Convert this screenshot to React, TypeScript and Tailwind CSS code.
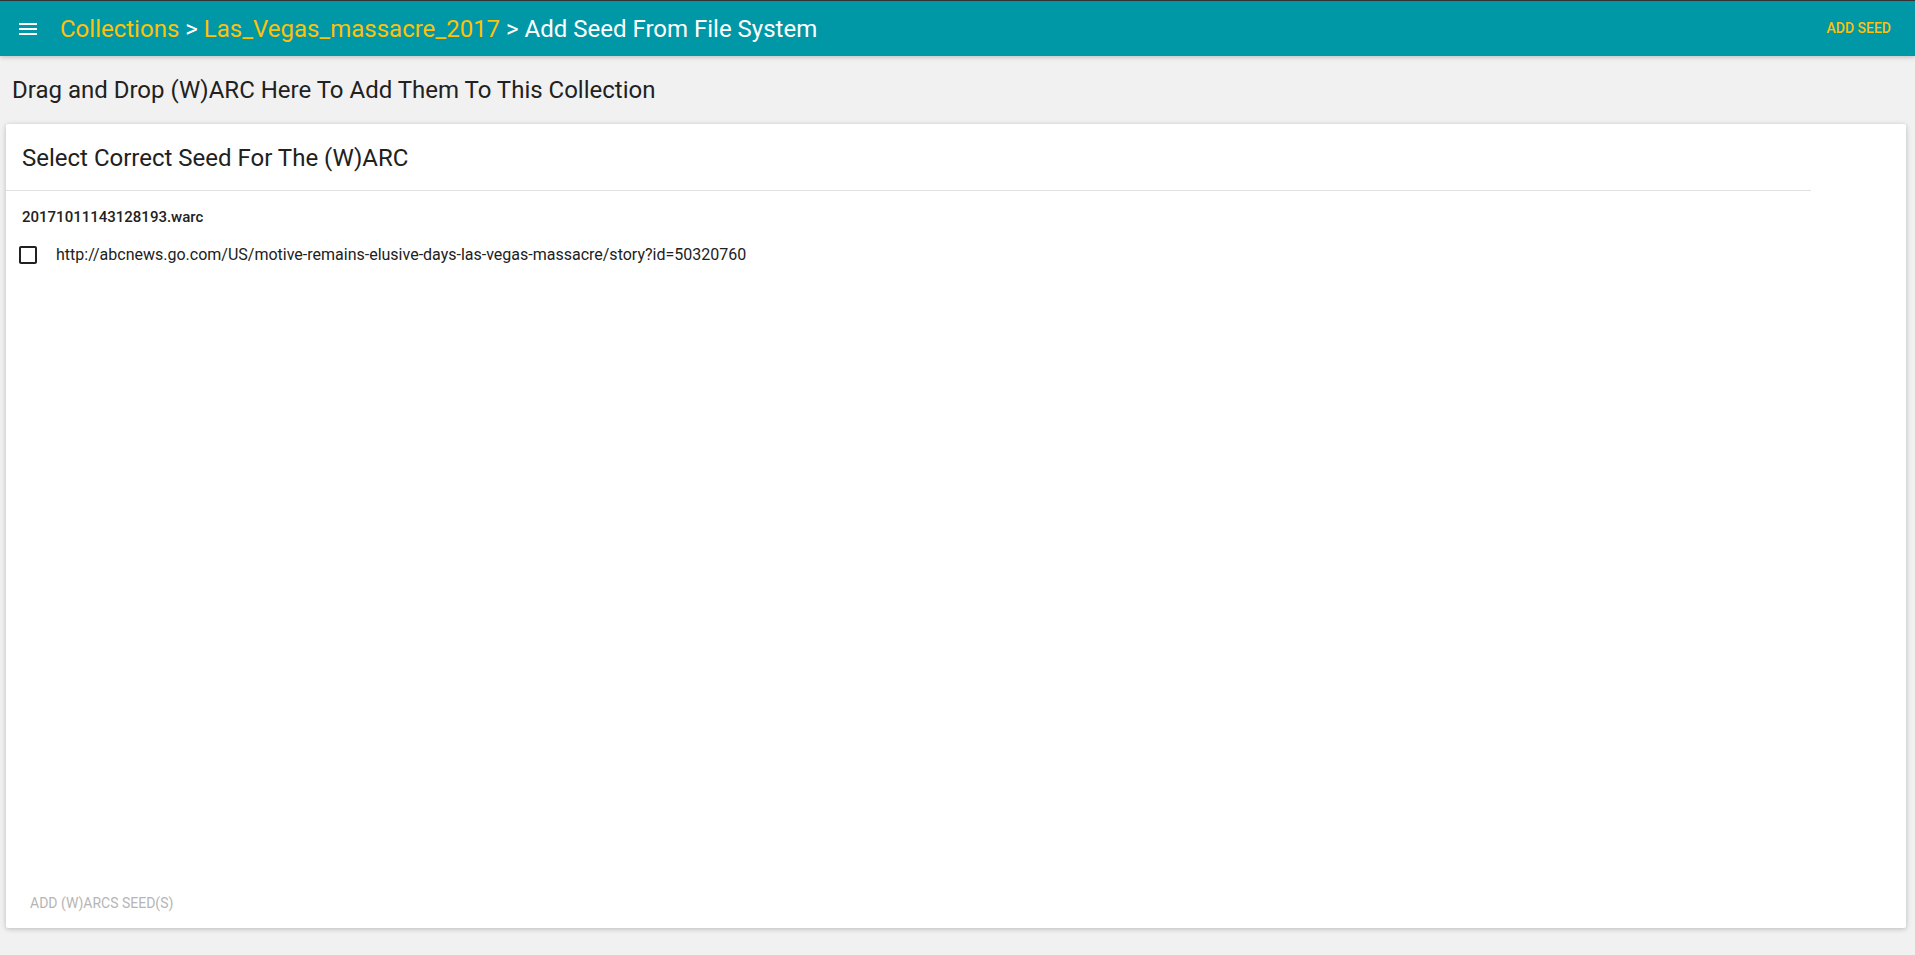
import { useState } from "react";

const warcs = [
  {
    name: "20171011143128193.warc",
    seeds: ["http://abcnews.go.com/US/motive-remains-elusive-days-las-vegas-massacre/story?id=50320760"],
  },
];

function MenuIcon() {
  return (
    <svg width="24" height="24" viewBox="0 0 24 24" fill="#ffffff">
      <path d="M3 18h18v-2H3v2zm0-5h18v-2H3v2zm0-7v2h18V6H3z" />
    </svg>
  );
}

function CheckBox({ checked, onClick }: { checked: boolean; onClick: () => void }) {
  return (
    <button onClick={onClick} className="w-6 h-6 flex items-center justify-center shrink-0">
      <svg width="24" height="24" viewBox="0 0 24 24" fill="#212121">
        {checked ? (
          <path d="M19 3H5c-1.11 0-2 .9-2 2v14c0 1.1.89 2 2 2h14c1.11 0 2-.9 2-2V5c0-1.1-.89-2-2-2zm-9 14l-5-5 1.41-1.41L10 14.17l7.59-7.59L19 8l-9 9z" />
        ) : (
          <path d="M19 5v14H5V5h14m0-2H5c-1.1 0-2 .9-2 2v14c0 1.1.9 2 2 2h14c1.1 0 2-.9 2-2V5c0-1.1-.9-2-2-2z" />
        )}
      </svg>
    </button>
  );
}

export default function App() {
  const [picked, setPicked] = useState<Record<string, boolean>>({});
  const anyPicked = Object.values(picked).some(Boolean);

  return (
    <div className="min-h-screen bg-[#f1f1f1] flex flex-col" style={{ fontFamily: "Roboto, 'Liberation Sans', sans-serif" }}>
      <header className="h-[56px] border-t border-[#333333] bg-[#0097a7] flex items-center pl-4 pr-6 shadow-[0_1px_6px_rgba(0,0,0,0.12),0_1px_4px_rgba(0,0,0,0.12)] relative z-10">
        <MenuIcon />
        <h1 className="ml-5 text-[24px] text-white leading-none">
          <span className="text-[#ffc107]">Collections</span>
          {" > "}
          <span className="text-[#ffc107]">Las_Vegas_massacre_2017</span>
          {" > Add Seed From File System"}
        </h1>
        <button className="ml-auto text-[14px] font-medium text-[#ffc107] uppercase">Add Seed</button>
      </header>

      <p className="px-3 pt-[19px] pb-[19px] text-[24px] text-[#212121] leading-[30px]">
        Drag and Drop (W)ARC Here To Add Them To This Collection
      </p>

      <div className="ml-[6px] mr-[9px] h-[804px] bg-white rounded-[2px] shadow-[0_1px_6px_rgba(0,0,0,0.12),0_1px_4px_rgba(0,0,0,0.12)] flex flex-col">
        <div className="w-[95%] border-b border-[#e0e0e0] h-[67px] flex items-center px-4">
          <span className="text-[24px] text-[#212121] leading-none pt-[1px]">Select Correct Seed For The (W)ARC</span>
        </div>
        <div className="flex-1 px-4 pt-[16px]">
          {warcs.map((w) => (
            <div key={w.name}>
              <p className="text-[15px] font-medium text-[#212121] leading-[20px]">{w.name}</p>
              {w.seeds.map((s) => (
                <div key={s} className="flex items-center gap-[16px] mt-[16px] -ml-[6px]">
                  <CheckBox checked={!!picked[s]} onClick={() => setPicked({ ...picked, [s]: !picked[s] })} />
                  <span className="text-[16px] text-[#212121]">{s}</span>
                </div>
              ))}
            </div>
          ))}
        </div>
        <div className="px-2 pb-[7px]">
          <button
            disabled={!anyPicked}
            className={`h-9 px-4 text-[14px] uppercase ${anyPicked ? "text-[#0097a7]" : "text-[#b5b5b5]"}`}
          >
            Add (W)ARCs Seed(s)
          </button>
        </div>
      </div>
    </div>
  );
}
